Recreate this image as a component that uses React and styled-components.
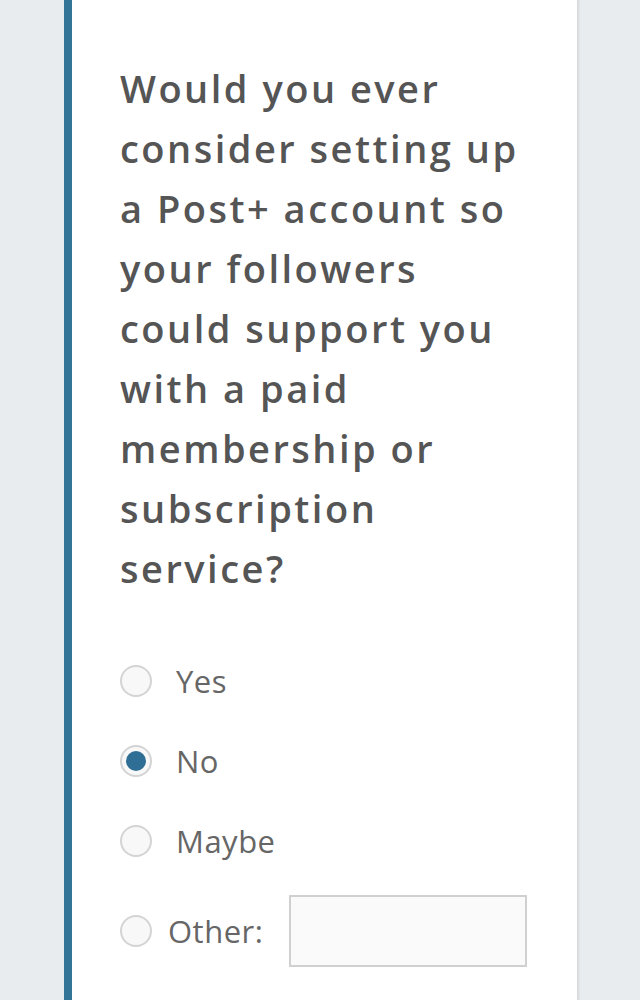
import React, { useState } from 'react'
import styled, { createGlobalStyle } from 'styled-components'

const GlobalStyle = createGlobalStyle`
  html, body {
    margin: 0;
    padding: 0;
    background: #e8ecef;
  }
  body {
    font-family: 'Open Sans', 'Liberation Sans', sans-serif;
  }
`

const Page = styled.div`
  display: flex;
  padding-left: 64px;
  min-height: 1000px;
  overflow: hidden;
`

const Card = styled.section`
  width: 513px;
  background: #fff;
  border-left: 8px solid #337597;
  box-shadow: 2px 0 2px rgba(0, 0, 0, 0.08);
  padding: 58px 48px 0 48px;
  box-sizing: border-box;
`

const Question = styled.h2`
  margin: 0;
  font-size: 38px;
  font-weight: 600;
  line-height: 60px;
  letter-spacing: 2.5px;
  color: #555;
`

const Options = styled.div`
  margin-top: 43px;
  display: flex;
  flex-direction: column;
`

const Row = styled.label`
  display: flex;
  align-items: center;
  height: ${p => (p.$tall ? '100px' : '80px')};
  cursor: pointer;
`

const Radio = styled.span`
  width: 28px;
  height: 28px;
  flex: none;
  border-radius: 50%;
  border: 2px solid #d4d4d4;
  background: #f8f8f8;
  display: flex;
  align-items: center;
  justify-content: center;
  margin-right: ${p => (p.$tight ? '16px' : '24px')};

  &::after {
    content: '';
    width: 20px;
    height: 20px;
    border-radius: 50%;
    background: #2f6f96;
    display: ${p => (p.$checked ? 'block' : 'none')};
  }
`

const Label = styled.span`
  font-size: 31px;
  color: #666;
  letter-spacing: 0.5px;
`

const OtherInput = styled.input`
  margin-left: 26px;
  width: 238px;
  height: 72px;
  box-sizing: border-box;
  border: 2px solid #d0d0d0;
  background: #fafafa;
  font: inherit;
  font-size: 24px;
  outline: none;
`

export default function App() {
  const [value, setValue] = useState('No')
  const opts = ['Yes', 'No', 'Maybe']
  return (
    <>
      <GlobalStyle />
      <Page>
        <Card>
          <Question>
            Would you ever consider setting up a Post+ account so your followers
            could support you with a paid membership or subscription service?
          </Question>
          <Options>
            {opts.map(o => (
              <Row key={o} onClick={() => setValue(o)}>
                <Radio $checked={value === o} />
                <Label>{o}</Label>
              </Row>
            ))}
            <Row $tall onClick={() => setValue('Other')}>
              <Radio $checked={value === 'Other'} $tight />
              <Label>Other:</Label>
              <OtherInput type="text" />
            </Row>
          </Options>
        </Card>
      </Page>
    </>
  )
}
